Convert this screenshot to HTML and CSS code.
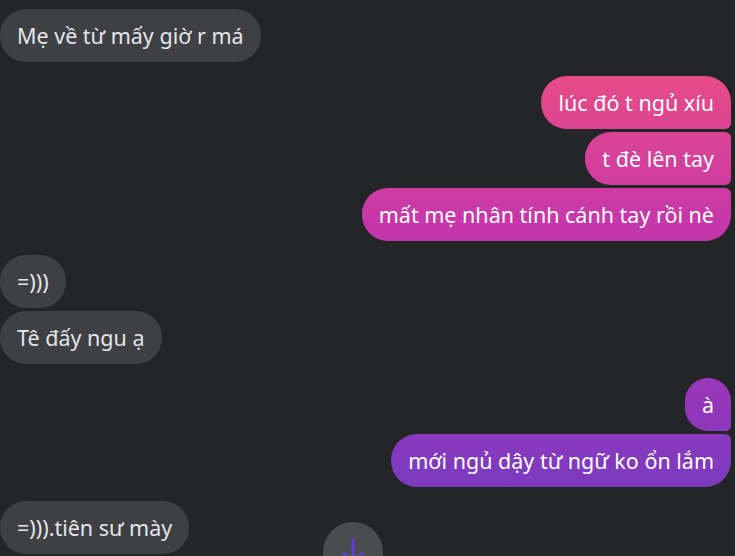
FILE: index.html
```html
<!DOCTYPE html>
<html lang="vi">
<head>
<meta charset="utf-8">
<title>Chat</title>
<link rel="stylesheet" href="styles.css">
</head>
<body>
<main class="chat">
  <div class="group in">
    <div class="msg single">Mẹ về từ mấy giờ r má</div>
  </div>
  <div class="group out">
    <div class="msg first">lúc đó t ngủ xíu</div>
    <div class="msg mid">t đè lên tay</div>
    <div class="msg last">mất mẹ nhân tính cánh tay rồi nè</div>
  </div>
  <div class="group in">
    <div class="msg first">=)))</div>
    <div class="msg last">Tê đấy ngu ạ</div>
  </div>
  <div class="group out">
    <div class="msg first">à</div>
    <div class="msg last">mới ngủ dậy từ ngữ ko ổn lắm</div>
  </div>
  <div class="group in">
    <div class="msg single">=))).tiên sư mày</div>
  </div>
</main>
<button class="scroll-btn" aria-label="Scroll to bottom">
  <svg viewBox="0 0 24 24" width="30" height="30" fill="none" stroke="currentColor" stroke-width="2.2" stroke-linecap="round" stroke-linejoin="round"><path d="M12 3v18"/><path d="M4.5 13.5 12 21l7.5-7.5"/></svg>
</button>
</body>
</html>
```
FILE: styles.css
```css
html, body {
  margin: 0;
  height: 100%;
  overflow: hidden;
  background: #242527;
}

body {
  font-family: "Noto Sans", "Open Sans", sans-serif;
  position: relative;
}

.chat {
  display: flex;
  flex-direction: column;
  gap: 14px;
  padding-top: 9px;
}

.group {
  display: flex;
  flex-direction: column;
  gap: 3px;
}

.group.in { align-items: flex-start; }
.group.out { align-items: flex-end; padding-right: 4px; }

.msg {
  font-size: 21.5px;
  line-height: 29px;
  padding: 12px 17px;
  border-radius: 26px;
  white-space: nowrap;
}

.in .msg {
  background: #3e4043;
  color: #e4e6eb;
}

.out .msg {
  color: #ffffff;
  background-image: linear-gradient(180deg, #f2547b 0px, #e54b85 80px, #d5409c 160px, #c737a9 220px, #a936b5 330px, #9537ba 400px, #7f3abf 470px, #703cc3 556px);
  background-attachment: fixed;
}

.out .msg.first { border-radius: 26px 26px 6px 26px; }
.out .msg.mid { border-radius: 26px 6px 6px 26px; }
.out .msg.last { border-radius: 26px 6px 26px 26px; }

.scroll-btn {
  position: absolute;
  left: 323px;
  top: 522px;
  width: 60px;
  height: 60px;
  border-radius: 50%;
  border: none;
  padding: 0;
  background: #4b4c4f;
  color: #5b3fd6;
  display: flex;
  justify-content: center;
  padding-top: 14px;
  box-sizing: border-box;
}
```
